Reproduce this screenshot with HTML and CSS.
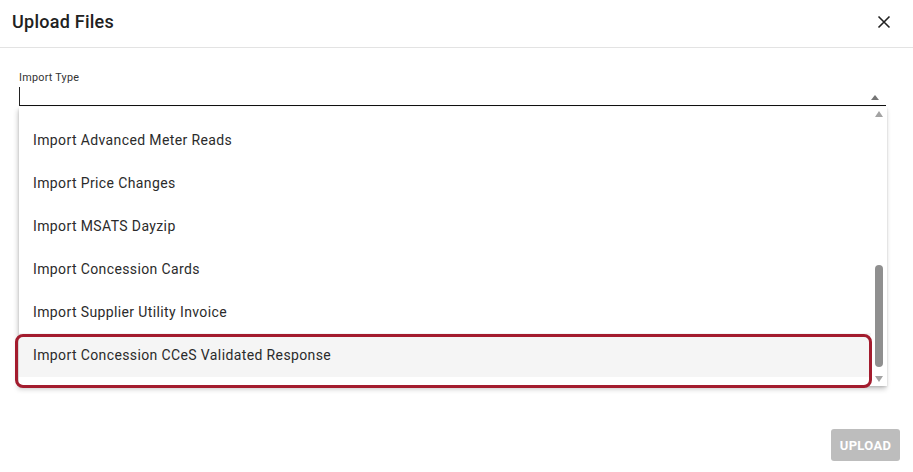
FILE: index.html
```html
<!DOCTYPE html>
<html>
<head>
<meta charset="utf-8">
<link rel="stylesheet" href="styles.css">
</head>
<body>
<div class="dialog">
  <header class="dlg-header">
    <h1 class="dlg-title">Upload Files</h1>
    <button class="close" aria-label="Close">
      <svg width="14" height="14" viewBox="0 0 14 14"><path d="M1.5 1.5 L12.5 12.5 M12.5 1.5 L1.5 12.5" stroke="#222" stroke-width="1.6" fill="none"/></svg>
    </button>
  </header>
  <div class="dlg-body">
    <div class="field">
      <label class="field-label">Import Type</label>
      <div class="field-input">
        <span class="caret"></span>
        <span class="arrow-up"></span>
      </div>
      <div class="menu">
        <div class="menu-list">
          <div class="menu-item">Import Advanced Meter Reads</div>
          <div class="menu-item">Import Price Changes</div>
          <div class="menu-item">Import MSATS Dayzip</div>
          <div class="menu-item">Import Concession Cards</div>
          <div class="menu-item">Import Supplier Utility Invoice</div>
          <div class="menu-item selected">Import Concession CCeS Validated Response</div>
        </div>
        <div class="scrollbar">
          <span class="sb-up"></span>
          <div class="sb-track"><div class="sb-thumb"></div></div>
          <span class="sb-down"></span>
        </div>
        <div class="highlight"></div>
      </div>
    </div>
  </div>
  <footer class="dlg-actions">
    <button class="btn-upload" disabled>UPLOAD</button>
  </footer>
</div>
</body>
</html>
```
FILE: styles.css
```css
* { box-sizing: border-box; }
html, body { margin: 0; padding: 0; background: #fff; }
body {
  font-family: Roboto, "Liberation Sans", Arial, sans-serif;
  color: #212121;
  width: 913px;
  height: 472px;
  overflow: hidden;
}
.dialog { display: flex; flex-direction: column; height: 472px; }
.dlg-header {
  height: 48px;
  border-bottom: 1px solid #e3e3e3;
  display: flex;
  align-items: center;
  justify-content: space-between;
  padding: 0 22px 4px 12px;
}
.dlg-title {
  margin: 0;
  font-size: 18px;
  font-weight: 500;
  letter-spacing: 0.25px;
  color: #212121;
  line-height: 24px;
}
.close {
  border: 0; background: none; padding: 0; width: 14px; height: 14px;
  display: flex; align-items: center; justify-content: center;
}
.dlg-body { padding: 22px 27px 0 19px; }
.field { position: relative; }
.field-label {
  display: block;
  font-size: 10.8px;
  letter-spacing: 0.25px;
  line-height: 13px;
  padding-top: 1px;
  color: #333;
}
.field-input {
  height: 22px;
  border-bottom: 1px solid #111;
  display: flex;
  align-items: center;
  justify-content: space-between;
  padding: 0 7px 0 0;
}
.caret { width: 1px; height: 19px; background: #222; margin-top: 4px; }
.arrow-up {
  width: 0; height: 0;
  border-left: 4.5px solid transparent;
  border-right: 4.5px solid transparent;
  border-bottom: 5px solid #757575;
  margin-top: 6px;
}
.menu {
  position: absolute;
  left: 0; right: -1px;
  top: 37px;
  height: 279px;
  background: #fff;
  display: flex;
  box-shadow: -1px 3px 5px rgba(0,0,0,0.22), 0 1px 2px rgba(0,0,0,0.12);
}
.menu-list {
  flex: 1;
  padding-top: 11px;
  padding-right: 1px;
  overflow: hidden;
}
.menu-item {
  height: 43px;
  display: flex;
  align-items: center;
  padding-left: 14px;
  font-size: 14px;
  letter-spacing: 0.38px;
  color: #2b2b2b;
}
.menu-item.selected { background: #f5f5f5; height: 44px; }
.scrollbar {
  width: 15px;
  display: flex;
  flex-direction: column;
  align-items: center;
  padding: 4px 1px 0 0;
}
.sb-up, .sb-down {
  width: 0; height: 0;
  border-left: 4.5px solid transparent;
  border-right: 4.5px solid transparent;
}
.sb-up { border-bottom: 6px solid #a3a3a3; }
.sb-down { border-top: 6px solid #a3a3a3; margin-bottom: 4px; }
.sb-track { flex: 1; width: 100%; padding: 148px 2px 9px 2px; display: flex; }
.sb-thumb { flex: 1; background: #8f8f8f; border-radius: 5px; margin: 0 1px; }
.highlight {
  position: absolute;
  left: -4px;
  top: 227px;
  width: 857px;
  height: 54px;
  border: 3px solid #a31c2e;
  border-radius: 8px;
  pointer-events: none;
}
.dlg-actions {
  margin-top: auto;
  display: flex;
  justify-content: flex-end;
  padding: 0 13px 11px 0;
}
.btn-upload {
  width: 69px;
  height: 32px;
  border: 0;
  border-radius: 3px;
  background: #bdbdbd;
  color: #fff;
  font-family: Roboto, "Liberation Sans", Arial, sans-serif;
  font-weight: 700;
  font-size: 13px;
  letter-spacing: 0.3px;
  padding: 0;
}
```
